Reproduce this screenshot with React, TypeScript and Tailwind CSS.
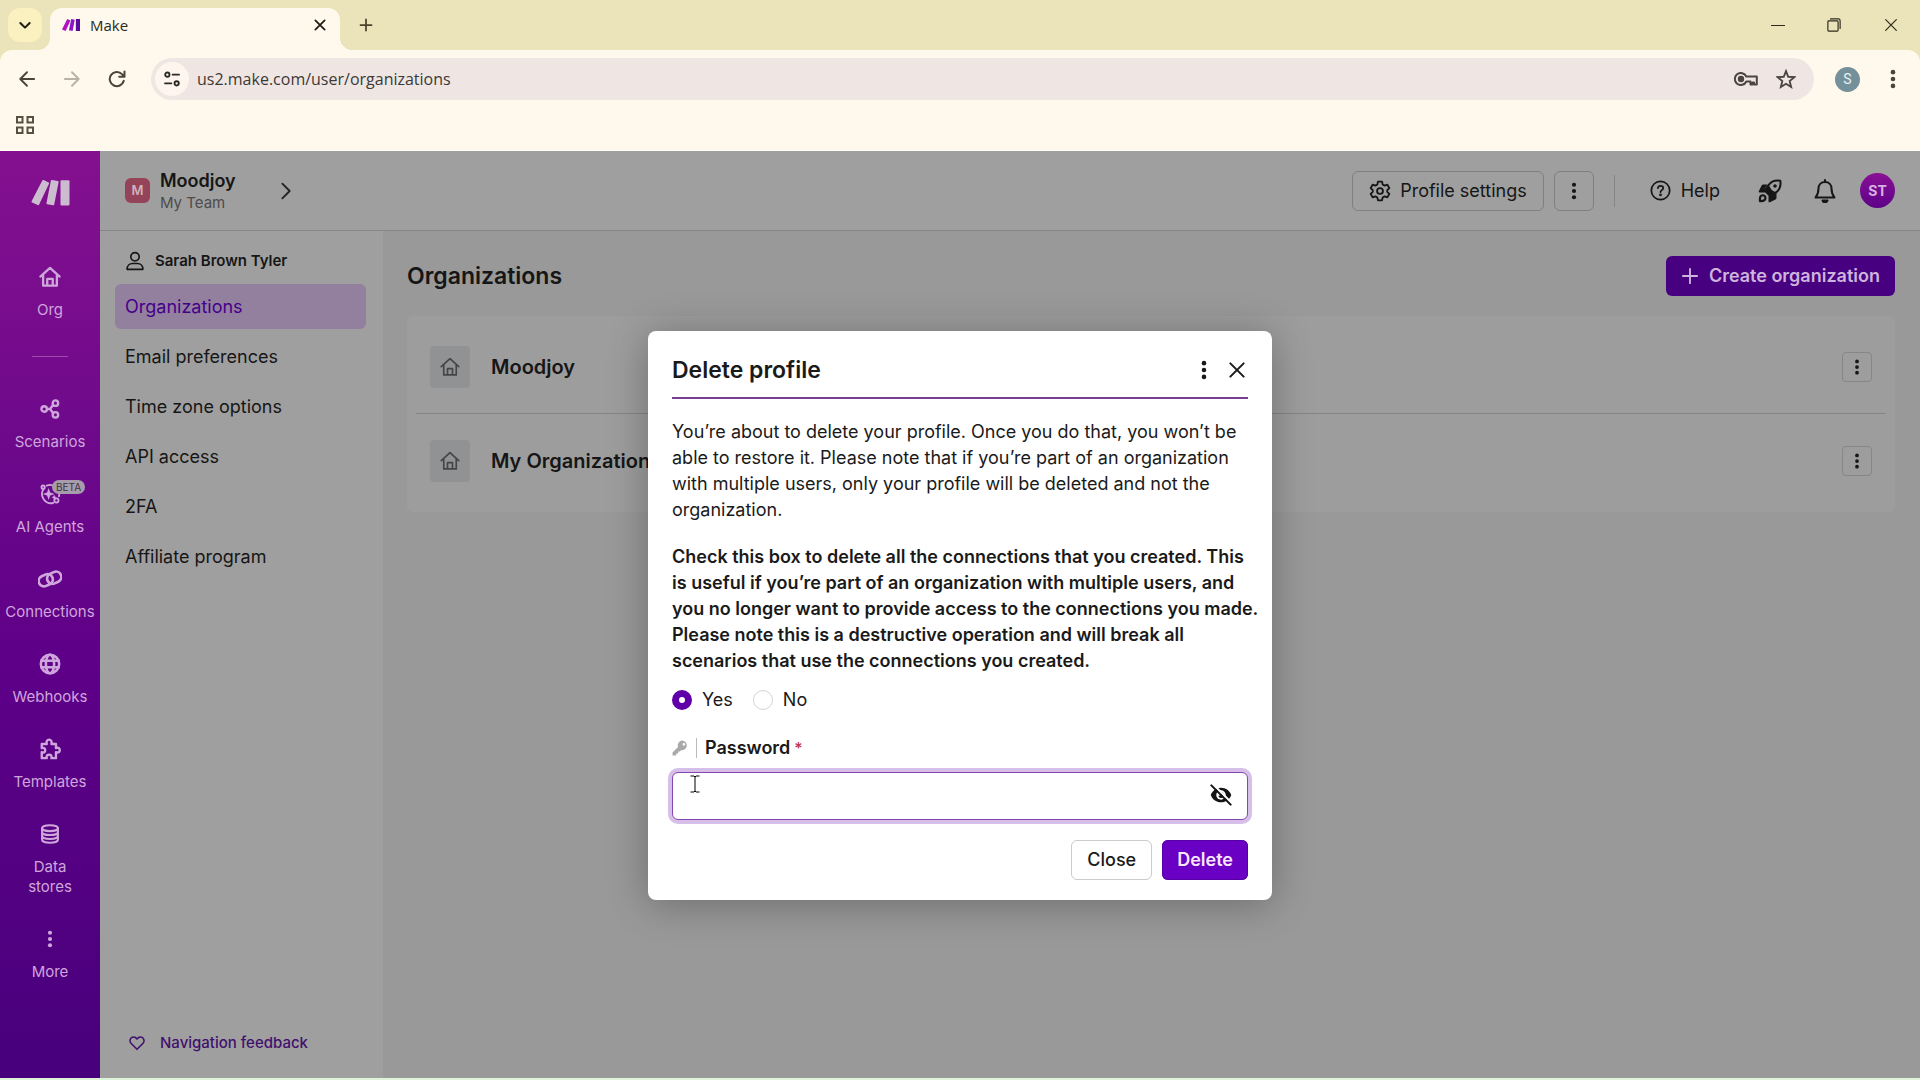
import type { ReactNode } from "react";

type IconProps = { className?: string };

function Svg({ className, box = 24, width = 2, children }: { className?: string; box?: number; width?: number; children: ReactNode }) {
  return (
    <svg viewBox={`0 0 ${box} ${box}`} className={className} fill="none" stroke="currentColor" strokeWidth={width} strokeLinecap="round" strokeLinejoin="round" aria-hidden="true">
      {children}
    </svg>
  );
}

const HomeIcon = ({ className, width = 2 }: { className?: string; width?: number }) => (
  <Svg className={className} width={width}>
    <path d="M1.5 11.5 12 2l10.5 9.5M4.5 9v12.5h15V9M9 21.5V14h6v7.5" />
  </Svg>
);

const DotsIcon = ({ className }: IconProps) => (
  <svg viewBox="0 0 24 24" className={className} fill="currentColor" aria-hidden="true">
    <circle cx="12" cy="4.5" r="2.5" />
    <circle cx="12" cy="12" r="2.5" />
    <circle cx="12" cy="19.5" r="2.5" />
  </svg>
);

const CrossIcon = ({ className, width = 2 }: { className?: string; width?: number }) => (
  <Svg className={className} width={width}>
    <path d="M4 4l16 16M20 4L4 20" />
  </Svg>
);

const PlusIcon = ({ className, width = 2.5 }: { className?: string; width?: number }) => (
  <Svg className={className} width={width}>
    <path d="M12 2.5v19M2.5 12h19" />
  </Svg>
);

const ShareIcon = ({ className }: IconProps) => (
  <Svg className={className} width={2.8}>
    <circle cx="5" cy="12" r="3.3" />
    <circle cx="18.500" cy="5" r="3.300" />
    <circle cx="18.500" cy="19" r="3.300" />
    <path d="M8.500 12H12l3.500-4.500M12 12l3.500 4.500" />
  </Svg>
);

const AgentIcon = ({ className }: IconProps) => (
  <svg viewBox="0 0 24 24" className={className} fill="none" stroke="currentColor" strokeWidth="2" strokeLinecap="round" aria-hidden="true">
    <path d="M5 6.500A10 10 0 0 0 15.500 21.800M21.800 14.500A10 10 0 0 0 8.500 2.800" />
    <circle cx="4.500" cy="4.500" r="1.800" />
    <circle cx="19" cy="19" r="2.300" />
    <path d="M10.500 5.500l1.700 4.800 4.800 1.700-4.800 1.700-1.700 4.800-1.700-4.800L4 12l4.800-1.700z" fill="currentColor" stroke="none" />
    <path d="M16.500 12.500l.9 2.100 2.100.9-2.100.9-.9 2.100-.9-2.100-2.100-.9 2.100-.9z" fill="currentColor" stroke="none" />
  </svg>
);

const LinkIcon = ({ className }: IconProps) => (
  <Svg className={className} width={2.7}>
    <rect x="0.500" y="8" width="14.500" height="10.500" rx="5.250" transform="rotate(-25 7.750 13.250)" />
    <rect x="9" y="5.500" width="14.500" height="10.500" rx="5.250" transform="rotate(-25 16.250 10.750)" />
  </Svg>
);

const GlobeIcon = ({ className }: IconProps) => (
  <Svg className={className} width={2.8}>
    <circle cx="12" cy="12" r="10" />
    <ellipse cx="12" cy="12" rx="4.500" ry="10" />
    <path d="M2.500 8.500h19M2.500 15.500h19" />
  </Svg>
);

const PuzzleIcon = ({ className }: IconProps) => (
  <Svg className={className} width={2.6}>
    <path d="M3 6.500h5.500C7.500 3.500 9 1.800 11 1.800s3.500 1.700 2.500 4.700H18.500V11c2.500-1 4.200.3 4.200 2.300s-1.700 3.200-4.200 2.200V22H13.500c.8-2.500-.5-3.800-2.500-3.800S7.700 19.500 8.500 22H3V15.500c2.500.8 3.800-.3 3.800-2.200S5.500 10.200 3 11z" />
  </Svg>
);

const DatabaseIcon = ({ className }: IconProps) => (
  <Svg className={className} width={2.5}>
    <ellipse cx="12" cy="5" rx="9.500" ry="3.500" />
    <path d="M2.500 5v14c0 2 4.200 3.500 9.500 3.500s9.500-1.500 9.500-3.500V5M2.500 9.800c0 2 4.200 3.400 9.500 3.400s9.500-1.400 9.500-3.400M2.500 14.500c0 2 4.200 3.400 9.500 3.400s9.500-1.400 9.500-3.400" />
  </Svg>
);

const PersonIcon = ({ className }: IconProps) => (
  <Svg className={className}>
    <circle cx="12" cy="7" r="5" />
    <path d="M2.500 22c0-4.500 3-7 6.500-7h6c3.500 0 6.500 2.500 6.500 7z" />
  </Svg>
);

const GearIcon = ({ className }: IconProps) => (
  <Svg className={className}>
    <circle cx="12" cy="12" r="3.200" />
    <path d="M9.800 1.800h4.400l.7 3.100 2.100 1.200 3-1 2.200 3.800-2.300 2.100v2l2.300 2.100-2.200 3.800-3-1-2.100 1.200-.7 3.100H9.800l-.7-3.100L7 17.900l-3 1-2.200-3.800L4.100 13v-2L1.800 8.900 4 5.100l3 1 2.100-1.200z" />
  </Svg>
);

const HelpIcon = ({ className }: IconProps) => (
  <Svg className={className}>
    <circle cx="12" cy="12" r="10.500" />
    <path d="M9 9.200c.3-1.700 1.500-2.500 3-2.500 1.800 0 3.100 1 3.100 2.600 0 2.200-3.100 2.300-3.100 4.500" />
    <circle cx="12" cy="17" r="0.600" fill="currentColor" />
  </Svg>
);

const RocketIcon = ({ className }: IconProps) => (
  <svg viewBox="0 0 24 24" className={className} aria-hidden="true">
    <path d="M22.300 1.700c-5.300-.9-9 .4-12 4.600L7.300 10.700l6 6 4.400-3c4.200-3 5.500-6.700 4.600-12z" fill="none" stroke="currentColor" strokeWidth="2" strokeLinejoin="round" />
    <path d="M9.500 5.500H5.200c-.7 0-1.300.4-1.600 1L.8 12.300c-.3.600.1 1.200.8 1.200h5.600l3.300 3.300v5.600c0 .7.700 1.100 1.300.8l5.700-2.800c.6-.3 1-.9 1-1.600V14l-5 3-7-7z" fill="currentColor" />
    <path d="M7 10.500l3.500-4.800 3.200 5.200 4.800 2.800-4.800 3.300z" fill="currentColor" />
    <circle cx="17" cy="7" r="1.800" fill="currentColor" />
    <path d="M2.800 17c1-1 2.900-1 3.900 0s1 2.900 0 3.900C5.700 21.900 3.900 22.200 2 22.100 1.800 19.900 1.800 18 2.800 17z" fill="none" stroke="currentColor" strokeWidth="2.200" strokeLinejoin="round" />
  </svg>
);

const BellIcon = ({ className }: IconProps) => (
  <Svg className={className}>
    <path d="M12 1v2M12 3C8 3 5.500 5.800 5.500 9.500c0 4.500-1 6.500-3 9h19c-2-2.500-3-4.500-3-9C18.500 5.800 16 3 12 3z" />
    <path d="M9.500 21.500a2.600 2.600 0 0 0 5 0z" fill="currentColor" />
  </Svg>
);

const HeartIcon = ({ className }: IconProps) => (
  <Svg className={className} width={2.3}>
    <path d="M12 21.500 3.300 12.700C-.2 9 1.800 3.300 6.500 3c2.500-.1 4.300 1.200 5.500 3 1.200-1.800 3-3.100 5.500-3 4.700.3 6.700 6 3.200 9.700z" />
  </Svg>
);

const KeyIcon = ({ className }: IconProps) => (
  <svg viewBox="0 0 24 24" className={className} fill="currentColor" aria-hidden="true">
    <path fillRule="evenodd" d="M16 .8a7.300 7.300 0 0 0-6.900 9.700L.8 18.800V23.200h5.500v-3h3v-3h2.500l1.800-2A7.300 7.300 0 1 0 16 .8zm1.800 3.700a2 2 0 1 1 0 4 2 2 0 0 1 0-4z" />
  </svg>
);

const EyeOffIcon = ({ className }: IconProps) => (
  <svg viewBox="0 0 24 24" className={className} fill="none" aria-hidden="true">
    <path d="M12 4C6.500 4 2.500 7.500.8 12c1.700 4.500 5.700 8 11.200 8s9.500-3.500 11.200-8C21.500 7.500 17.500 4 12 4z" fill="#141414" />
    <circle cx="12" cy="12" r="5.200" fill="#fff" />
    <path d="M12.500 8.800a3.200 3.200 0 1 1-3.500 4c2 .4 4-1.500 3.500-4z" fill="#141414" />
    <path d="M3.500 0.500l20 20" stroke="#fff" strokeWidth="2.500" />
    <path d="M1.500 1.500l21 21" stroke="#141414" strokeWidth="2.300" strokeLinecap="round" />
  </svg>
);

const MakeLogo = ({ className }: IconProps) => (
  <svg viewBox="0 0 39 26" className={className} fill="currentColor" aria-hidden="true">
    <path d="M11.300.6a1 1 0 0 1 1.300-.5l5 2.300a1 1 0 0 1 .4 1.300L8 24.700a1 1 0 0 1-1.300.4l-5.600-2.500a1 1 0 0 1-.5-1.300z" />
    <path d="M19.800.9A1 1 0 0 1 21 .1l5.800.9a1 1 0 0 1 .8 1.200l-4.400 22.300a1 1 0 0 1-1.200.8l-5.700-1a1 1 0 0 1-.8-1.200z" />
    <rect x="29.500" y="0.300" width="9" height="25.200" rx="1" />
  </svg>
);

function BrowserChrome() {
  return (
    <div className="bg-[#ebe3b9] font-['Open_Sans',sans-serif] text-[#2c2a22]">
      <div className="flex h-[50px] items-stretch">
        <div className="flex items-center pl-2">
          <button aria-label="Search tabs" className="flex size-[34px] items-center justify-center rounded-xl bg-[#fbf0bf]">
            <Svg className="size-3.5 text-[#1f1d16]" width={3.5}>
              <path d="M4 8.500l8 8 8-8" />
            </Svg>
          </button>
        </div>
        <div className="relative mt-2 ml-2 flex w-[290px] items-center rounded-t-xl bg-[#fff8ec] pr-[10px] pb-2 pl-3">
          <span className="absolute bottom-0 -left-3 size-3 bg-[radial-gradient(circle_at_0_0,transparent_12px,#fff8ec_12px)]" />
          <span className="absolute -right-3 bottom-0 size-3 bg-[radial-gradient(circle_at_100%_0,transparent_12px,#fff8ec_12px)]" />
          <svg viewBox="0 0 39 26" className="h-3 w-[18px]" aria-hidden="true">
            <path d="M11.300 0l7 3L8 26l-8-3z" fill="#b012c4" />
            <path d="M20 0l7.500 1.500L23 26l-8-1.500z" fill="#8c14c8" />
            <path d="M30 0h9v26h-9z" fill="#5b0aa0" />
          </svg>
          <span className="ml-[10px] flex-1 text-[15px] leading-5">Make</span>
          <button aria-label="Close tab" className="flex size-5 items-center justify-center text-[#1c1b17]">
            <CrossIcon className="size-3.5" width={3} />
          </button>
        </div>
        <button aria-label="New tab" className="ml-4 flex w-5 items-center justify-center text-[#4a432a]">
          <PlusIcon className="size-3.5" width={3} />
        </button>
        <div className="ml-auto flex items-center gap-[42px] pr-[21px] text-[#2e2b1e]">
          <button aria-label="Minimize" className="flex size-3.5 items-center justify-center">
            <span className="h-px w-3.5 bg-current" />
          </button>
          <button aria-label="Restore">
            <Svg className="size-3.5" width={2}>
              <rect x="1.500" y="5" width="17.500" height="17.500" rx="1.500" />
              <path d="M6 1.500h13.500c2 0 3 1 3 3V18" />
            </Svg>
          </button>
          <button aria-label="Close window">
            <CrossIcon className="size-4" width={1.8} />
          </button>
        </div>
      </div>
      <div className="rounded-t-xl bg-[#fff8ec]">
        <div className="flex h-[58px] items-center pr-4 pl-[18px]">
          <button aria-label="Back" className="text-[#4a4538]">
            <Svg className="size-[18px]" width={2.5}>
              <path d="M21.500 12H3.500M12 3l-9 9 9 9" />
            </Svg>
          </button>
          <button aria-label="Forward" className="ml-[27px] text-[#b9b3a6]">
            <Svg className="size-[18px]" width={2.5}>
              <path d="M2.500 12h18M12 3l9 9-9 9" />
            </Svg>
          </button>
          <button aria-label="Reload" className="ml-[27px] text-[#4a4538]">
            <Svg className="size-[18px]" width={2.700}>
              <path d="M21 14.500a9.500 9.500 0 1 1-2.300-9L22 9M22 2v7h-7" />
            </Svg>
          </button>
          <div className="ml-[25px] flex h-[42px] flex-1 items-center rounded-full bg-[#efe6e4] pr-[18px] pl-1">
            <button aria-label="Site information" className="flex size-[34px] items-center justify-center rounded-full bg-[#fdf5ee] text-[#2b2925]">
              <Svg className="size-4" width={2.800}>
                <circle cx="5" cy="5.500" r="3.200" />
                <path d="M13 5.500h9.500M1.500 18.500h9.500" />
                <circle cx="19" cy="18.500" r="3.200" />
              </Svg>
            </button>
            <input type="text" aria-label="Address" defaultValue="us2.make.com/user/organizations" className="ml-2 h-8 min-w-0 flex-1 bg-transparent text-base text-[#3c3936] outline-none" />
            <button aria-label="Passwords" className="text-[#4c4440]">
              <svg viewBox="0 0 24 14" className="h-[14px] w-6" fill="none" stroke="currentColor" strokeWidth="2" aria-hidden="true">
                <path d="M12.300 4.500A6 6 0 1 0 12.300 9.500H16.500V12.500H18.500V10.500H20V12.500H22.800V4.500z" strokeLinejoin="round" />
                <circle cx="7" cy="7" r="2.200" fill="currentColor" />
              </svg>
            </button>
            <button aria-label="Bookmark this page" className="ml-[18px] text-[#4c4440]">
              <svg viewBox="0 0 24 24" className="size-5" fill="none" stroke="currentColor" strokeWidth="2.200" aria-hidden="true">
                <path d="M12 2.500l2.700 6.800 7.300.5-5.600 4.700 1.800 7.100L12 17.700l-6.200 3.900 1.800-7.100L2 9.800l7.300-.5z" />
              </svg>
            </button>
          </div>
          <button aria-label="Profile S" className="ml-[21px] flex size-[25px] items-center justify-center rounded-full bg-[#74909b] font-['Roboto',sans-serif] text-sm text-[#e6f1f5]">S</button>
          <button aria-label="Browser menu" className="ml-[22px] text-[#4a4538]">
            <DotsIcon className="size-[22px]" />
          </button>
        </div>
        <div className="flex h-[43px] items-center border-b border-[#fffdf6] pb-2 pl-4">
          <button aria-label="Apps" className="text-[#55503f]">
            <svg viewBox="0 0 18 18" className="size-[18px]" fill="none" stroke="currentColor" strokeWidth="2" aria-hidden="true">
              <rect x="1" y="1" width="5.500" height="5.500" />
              <rect x="11.500" y="1" width="5.500" height="5.500" />
              <rect x="1" y="11.500" width="5.500" height="5.500" />
              <rect x="11.500" y="11.500" width="5.500" height="5.500" />
            </svg>
          </button>
        </div>
      </div>
    </div>
  );
}

function RailItem({ icon, label, badge }: { icon: ReactNode; label: string; badge?: string }) {
  return (
    <a href="#" className="flex w-full flex-col items-center gap-[11px]">
      <span className="relative flex size-6 items-center justify-center">
        {icon}
        {badge && (
          <span className="absolute -top-0.5 left-[14px] rounded-full bg-[#a79cab] px-1 text-[10px] leading-[14px] text-[#3c3440]">{badge}</span>
        )}
      </span>
      <span className="text-center text-[15px] leading-5 whitespace-pre-line">{label}</span>
    </a>
  );
}

function Rail() {
  return (
    <nav aria-label="Main" className="flex w-[100px] shrink-0 flex-col items-center bg-linear-to-b from-[#84108f] via-[#5e0088] via-55% to-[#48007c] pt-[29px] text-[#cfa6dc]">
      <MakeLogo className="h-[26px] w-[39px] text-[#ccbccf]" />
      <div className="mt-[59px] w-full">
        <RailItem icon={<HomeIcon className="size-[22px]" width={2.5} />} label="Org" />
      </div>
      <div className="mt-9 h-px w-9 bg-[#a04aae]" />
      <div className="mt-10 flex w-full flex-col gap-[30px]">
        <RailItem icon={<ShareIcon className="size-5" />} label="Scenarios" />
        <RailItem icon={<AgentIcon className="size-[22px]" />} label="AI Agents" badge="BETA" />
        <RailItem icon={<LinkIcon className="size-6" />} label="Connections" />
        <RailItem icon={<GlobeIcon className="size-[22px]" />} label="Webhooks" />
        <RailItem icon={<PuzzleIcon className="size-[22px]" />} label="Templates" />
        <RailItem icon={<DatabaseIcon className="size-5" />} label={"Data\nstores"} />
        <RailItem icon={<DotsIcon className="size-5" />} label="More" />
      </div>
    </nav>
  );
}

function Header() {
  return (
    <header className="flex h-20 shrink-0 items-center border-b border-[#868686] bg-[#9f9f9f] px-[25px]">
      <span className="flex size-[25px] items-center justify-center rounded-md bg-[#954358] text-[13px] font-semibold text-[#d0b3bd]">M</span>
      <div className="ml-[10px] w-[115px]">
        <div className="text-lg leading-6 font-semibold">Moodjoy</div>
        <div className="text-[15px] leading-5 text-[#4c4c4c]">My Team</div>
      </div>
      <button aria-label="Expand" className="text-[#222]">
        <Svg className="size-[22px]" width={2}>
          <path d="M8 4l8 8-8 8" />
        </Svg>
      </button>
      <div className="ml-auto flex items-center">
        <button className="flex h-10 items-center gap-[9px] rounded-md border border-[#7f7f7f] px-4 text-lg">
          <GearIcon className="size-[22px]" />
          Profile settings
        </button>
        <button aria-label="More actions" className="ml-[10px] flex size-10 items-center justify-center rounded-md border border-[#7f7f7f]">
          <DotsIcon className="size-5" />
        </button>
        <span className="ml-5 h-8 w-px bg-[#858585]" />
        <button className="ml-[35px] flex items-center gap-[10px] text-lg">
          <HelpIcon className="size-[21px]" />
          Help
        </button>
        <button aria-label="What's new" className="ml-[38px]">
          <RocketIcon className="size-6" />
        </button>
        <button aria-label="Notifications" className="ml-[31px]">
          <BellIcon className="size-6" />
        </button>
        <button aria-label="Account" className="ml-[23px] flex size-[35px] items-center justify-center rounded-full bg-linear-to-b from-[#8a0f94] to-[#5c0088] text-sm font-bold text-[#d8b0e2]">ST</button>
      </div>
    </header>
  );
}

const sections = ["Email preferences", "Time zone options", "API access", "2FA", "Affiliate program"];

function Sidebar() {
  return (
    <aside className="flex w-[283px] shrink-0 flex-col bg-[#9f9f9f] pr-[17px] pl-[15px]">
      <div className="mt-5 flex h-5 items-center gap-[10px] pl-[10px] text-[15px] font-semibold">
        <PersonIcon className="size-5" />
        Sarah Brown Tyler
      </div>
      <nav aria-label="Profile" className="mt-[13px] flex flex-col gap-[5px] text-lg">
        <a href="#" aria-current="page" className="flex h-[45px] items-center rounded-md bg-[#93809f] pl-[10px] text-[#45008a]">Organizations</a>
        {sections.map((s) => (
          <a key={s} href="#" className="flex h-[45px] items-center pl-[10px]">{s}</a>
        ))}
      </nav>
      <a href="#" className="mt-auto mb-[23px] flex items-center gap-[15px] pl-[14px] text-[15px] leading-6 font-medium text-[#42106e]">
        <HeartIcon className="size-4" />
        Navigation feedback
      </a>
    </aside>
  );
}

function OrgRow({ name }: { name: string }) {
  return (
    <li className="flex h-[94px] items-center px-[14px]">
      <span className="flex h-[42px] w-10 items-center justify-center rounded bg-[#919294] text-[#454545]">
        <HomeIcon className="size-5" />
      </span>
      <span className="ml-[21px] flex-1 text-xl font-semibold">{name}</span>
      <button aria-label={`Actions for ${name}`} className="flex size-[30px] items-center justify-center rounded border border-[#868686]">
        <DotsIcon className="size-[18px]" />
      </button>
    </li>
  );
}

function Organizations() {
  return (
    <main className="flex-1 bg-[#999] pt-[25px] pr-[25px] pl-6">
      <div className="flex items-center justify-between">
        <h1 className="text-[23px] leading-8 font-semibold">Organizations</h1>
        <button className="flex h-10 items-center gap-[10px] rounded-md bg-[#47007f] px-[15px] text-lg font-semibold text-[#cdb3dd]">
          <PlusIcon className="size-[18px]" />
          Create organization
        </button>
      </div>
      <ul className="mt-5 divide-y divide-[#858585] rounded-md bg-[#9d9d9d] px-[9px] py-1">
        <OrgRow name="Moodjoy" />
        <OrgRow name="My Organization" />
      </ul>
    </main>
  );
}

function DeleteDialog() {
  return (
    <div className="absolute inset-0 flex items-start justify-center pt-[180px]">
      <div role="dialog" aria-modal="true" aria-labelledby="dialog-title" className="w-[624px] rounded-lg bg-white px-6 pb-5 text-[#1a1a1a] shadow-[0_4px_40px_rgba(0,0,0,0.3)]">
        <div className="flex h-[68px] items-center border-b-2 border-[#763f8f] pt-3">
          <h2 id="dialog-title" className="flex-1 text-[23px] leading-8 font-semibold">Delete profile</h2>
          <button aria-label="Dialog menu">
            <DotsIcon className="size-[22px]" />
          </button>
          <button aria-label="Close dialog" className="ml-3 pr-px">
            <CrossIcon className="size-5" width={2.4} />
          </button>
        </div>
        <p className="mt-5 text-lg leading-[26px]">
          You’re about to delete your profile. Once you do that, you won’t be able to restore it. Please note that if you’re part of an organization with multiple users, only your profile will be deleted and not the organization.
        </p>
        <fieldset>
          <legend className="-mr-3 w-[588px] pt-[21px] text-lg leading-[26px] font-semibold">
            Check this box to delete all the connections that you created. This is useful if you’re part of an organization with multiple users, and you no longer want to provide access to the connections you made. Please note this is a destructive operation and will break all scenarios that use the connections you created.
          </legend>
          <div className="mt-[14px] flex gap-5 text-lg leading-6">
            <label className="flex items-center gap-[10px]">
              <input type="radio" name="connections" defaultChecked className="size-5 appearance-none rounded-full border border-[#cfc6d4] checked:border-[7px] checked:border-[#5f00a8]" />
              Yes
            </label>
            <label className="flex items-center gap-[10px]">
              <input type="radio" name="connections" className="size-5 appearance-none rounded-full border border-[#d6d0d8] checked:border-[7px] checked:border-[#5f00a8]" />
              No
            </label>
          </div>
        </fieldset>
        <div className="mt-6 flex items-center">
          <KeyIcon className="size-4 text-[#a9a9a9]" />
          <span className="ml-2 h-5 w-px bg-[#bbb]" />
          <label htmlFor="password" className="ml-2 text-lg leading-6 font-semibold">
            Password<span className="ml-1 text-base font-medium text-[#c4304f]">*</span>
          </label>
        </div>
        <div className="relative mt-3">
          <input id="password" type="password" className="block h-12 w-full rounded-md border border-[#8546ad] bg-white pr-12 pl-4 text-lg ring-4 ring-[#d6bfe9] outline-none" />
          <button aria-label="Show password" className="absolute top-3 right-4">
            <EyeOffIcon className="size-[22px]" />
          </button>
          <svg viewBox="0 0 10 18" className="absolute top-[3px] left-[18px] h-[18px] w-[10px]" fill="none" stroke="#000" strokeWidth="1" aria-hidden="true">
            <path d="M.5 1h3.500l1 1 1-1h3.500M.5 17h3.500l1-1 1 1h3.500M5 2v14" />
          </svg>
        </div>
        <div className="mt-5 flex justify-end gap-[10px] text-lg">
          <button className="h-10 rounded-md border border-[#cbcbcb] px-[15px] font-medium">Close</button>
          <button className="h-10 rounded-md bg-[#6a00c4] px-[15px] font-semibold text-[#f8e6ff] shadow-[inset_0_0_0_1px_#5800a8]">Delete</button>
        </div>
      </div>
    </div>
  );
}

export default function App() {
  return (
    <div className="flex h-screen flex-col overflow-hidden bg-[#dff3d8]">
      <BrowserChrome />
      <div className="relative mb-0.5 flex min-h-0 flex-1 font-['Inter',sans-serif] text-[#161616]">
        <Rail />
        <div className="flex min-w-0 flex-1 flex-col">
          <Header />
          <div className="flex min-h-0 flex-1">
            <Sidebar />
            <Organizations />
          </div>
        </div>
        <DeleteDialog />
      </div>
    </div>
  );
}
